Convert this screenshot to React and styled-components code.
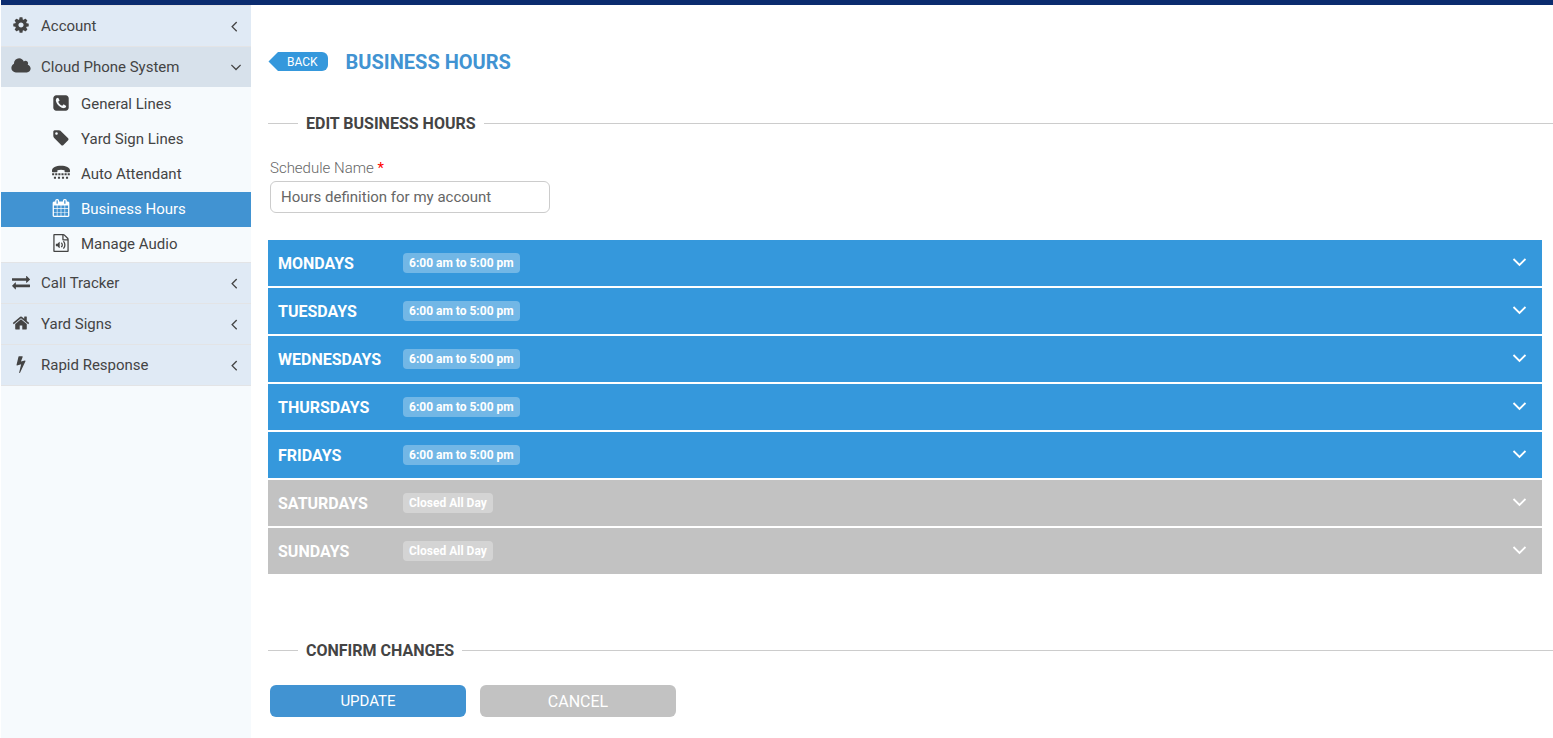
import React, { useState } from "react";
import styled, { createGlobalStyle } from "styled-components";

const Global = createGlobalStyle`
  *, *::before, *::after { box-sizing: border-box; }
  body {
    margin: 0;
    background: #fff;
    color: #444;
    font: 400 15px/20px Roboto, "Liberation Sans", sans-serif;
  }
  button, input { font: inherit; }
`;

const icons = {
  cog: ["0 0 1792 1792", "M1152 896q0-106-75-181t-181-75-181 75-75 181 75 181 181 75 181-75 75-181zm512-109v222q0 12-8 23t-20 13l-185 28q-19 54-39 91 35 50 107 138 10 12 10 25t-9 23q-27 37-99 108t-94 71q-12 0-26-9l-138-108q-44 23-91 38-16 136-29 186-7 28-36 28h-222q-14 0-24.5-8.5t-11.5-21.5l-28-184q-49-16-90-37l-141 107q-10 9-25 9-14 0-25-11-126-114-165-168-7-10-7-23 0-12 8-23 15-21 51-66.5t54-70.5q-27-50-41-99l-183-27q-13-2-21-12.5t-8-23.5v-222q0-12 8-23t19-13l186-28q14-46 39-92-40-57-107-138-10-12-10-24 0-10 9-23 26-36 98.5-107.5t94.5-71.5q13 0 26 10l138 107q44-23 91-38 16-136 29-186 7-28 36-28h222q14 0 24.5 8.5t11.5 21.5l28 184q49 16 90 37l142-107q9-9 24-9 13 0 25 10 129 119 165 170 7 8 7 22 0 12-8 23-15 21-51 66.5t-54 70.5q26 50 41 98l183 28q13 2 21 12.5t8 23.5z"],
  cloud: ["128 0 1792 1792", "M1984 1152q0 159-112.5 271.5t-271.5 112.5h-1088q-185 0-316.5-131.5t-131.5-316.5q0-132 71-241.5t187-163.5q-2-28-2-43 0-212 150-362t362-150q158 0 286.5 88t187.5 230q70-62 166-62 106 0 181 75t75 181q0 75-41 138 129 30 213 134.5t84 239.5z"],
  phone: ["0 0 1792 1792", "M1408 1193q0-11-2-16t-18-16.5-40.5-25-47.5-26.5-45.5-25-28.5-15q-5-3-19-13t-25-15-21-5q-15 0-36.5 20.5t-39.5 45-38.5 45-33.5 20.5q-7 0-16.5-3.5t-15.5-6.5-17-9.5-14-8.5q-99-55-170-126.5t-127-170.5q-2-3-8.5-14t-9.5-17-6.5-15.5-3.5-16.5q0-13 20.5-33.5t45-38.5 45-39.5 20.5-36.5q0-10-5-21t-15-25-13-19q-3-6-15-28.5t-25-45.5-26.5-47.5-25-40.5-16.5-18-16-2q-48 0-101 22-46 21-80 94.5t-34 130.5q0 16 2.5 34t5 30.5 9 33 10 29.5 12.5 33 11 30q60 164 216.5 320.5t320.5 216.5q6 2 30 11t33 12.5 29.5 10 33 9 30.5 5 34 2.5q57 0 130.5-34t94.5-80q22-53 22-101zm256-777v960q0 119-84.5 203.5t-203.5 84.5h-960q-119 0-203.5-84.5t-84.5-203.5v-960q0-119 84.5-203.5t203.5-84.5h960q119 0 203.5 84.5t84.5 203.5z"],
  tag: ["0 0 1792 1792", "M576 448q0-53-37.5-90.5t-90.5-37.5-90.5 37.5-37.5 90.5 37.5 90.5 90.5 37.5 90.5-37.5 37.5-90.5zm1067 576q0 53-37 90l-491 492q-39 37-91 37-53 0-90-37l-715-716q-38-37-64.5-101t-26.5-117v-416q0-52 38-90t90-38h416q53 0 117 26.5t102 64.5l715 714q37 39 37 91z"],
  tty: ["0 0 1792 1792", "M0 640C0 340 400 170 896 170s896 170 896 470v110q0 60-60 60h-420q-60 0-60-60v-120q-160-60-356-60t-356 60v120q0 60-60 60H60q-60 0-60-60zM10 920h210v210H10zM320 920h210v210H320zM630 920h210v210H630zM940 920h210v210H940zM1250 920h210v210h-210zM1560 920h210v210h-210zM190 1270h210v210H190zM590 1270h210v210H590zM990 1270h210v210H990zM1390 1270h210v210h-210z"],
  calendar: ["0 0 1792 1792", "M192 1664h288v-288h-288v288zm352 0h320v-288h-320v288zm-352-352h288v-320h-288v320zm352 0h320v-320h-320v320zm-352-384h288v-288h-288v288zm736 736h320v-288h-320v288zm-384-736h320v-288h-320v288zm768 736h288v-288h-288v288zm-384-352h320v-320h-320v320zm-352-864v-288q0-13-9.5-22.5t-22.5-9.5h-64q-13 0-22.5 9.5t-9.5 22.5v288q0 13 9.5 22.5t22.5 9.5h64q13 0 22.5-9.5t9.5-22.5zm736 864h288v-320h-288v320zm-384-384h320v-288h-320v288zm384 0h288v-288h-288v288zm32-480v-288q0-13-9.5-22.5t-22.5-9.5h-64q-13 0-22.5 9.5t-9.5 22.5v288q0 13 9.5 22.5t22.5 9.5h64q13 0 22.5-9.5t9.5-22.5zm384-64v1280q0 52-38 90t-90 38h-1408q-52 0-90-38t-38-90v-1280q0-52 38-90t90-38h128v-96q0-66 47-113t113-47h64q66 0 113 47t47 113v96h384v-96q0-66 47-113t113-47h64q66 0 113 47t47 113v96h128q52 0 90 38t38 90z"],
  audio: ["0 0 1792 1792", "M1596 380q28 28 48 76t20 88v1152q0 40-28 68t-68 28h-1344q-40 0-68-28t-28-68v-1600q0-40 28-68t68-28h896q40 0 88 20t76 48zm-444-244v376h376q-10-29-22-41l-313-313q-12-12-41-22zm384 1528v-1024h-416q-40 0-68-28t-28-68v-416h-768v1536h1280zM748 786q20 8 20 30v544q0 22-20 30-8 2-12 2-12 0-23-9l-166-167h-131q-14 0-23-9t-9-23v-192q0-14 9-23t23-9h131l166-167q16-15 35-7zm417 689q31 0 50-24 129-159 129-363t-129-363q-16-21-43-24t-47 14q-21 17-23.5 43.5t14.5 47.5q100 123 100 282t-100 282q-17 21-14.5 47.5t23.5 42.5q18 15 40 15zm-211-148q27 0 47-20 87-93 87-219t-87-219q-18-19-45-20t-46 17-20 44.5 18 46.5q52 57 52 131t-52 131q-19 20-18 46.5t20 44.5q20 17 44 17z"],
  exchange: ["0 0 1792 1792", "M1792 1184v192q0 13-9.5 22.5t-22.5 9.5h-1376v192q0 13-9.5 22.5t-22.5 9.5q-12 0-24-10l-319-320q-9-9-9-22 0-14 9-23l320-320q9-9 23-9 13 0 22.5 9.5t9.5 22.5v192h1376q13 0 22.5 9.5t9.5 22.5zm0-544q0 14-9 23l-320 320q-9 9-23 9-13 0-22.5-9.5t-9.5-22.5v-192h-1376q-13 0-22.5-9.5t-9.5-22.5v-192q0-13 9.5-22.5t22.5-9.5h1376v-192q0-14 9-23t23-9q12 0 24 10l319 319q9 9 9 23z"],
  home: ["0 0 1792 1792", "M1472 992v480q0 26-19 45t-45 19h-384v-384h-256v384h-384q-26 0-45-19t-19-45v-480q0-1 .5-3t.5-3l575-474 575 474q1 2 1 6zm223-69l-62 74q-8 9-21 11h-3q-13 0-21-7l-692-577-692 577q-12 8-24 7-13-2-21-11l-62-74q-8-10-7-23.5t11-21.5l719-599q32-26 76-26t76 26l244 204v-195q0-14 9-23t23-9h192q14 0 23 9t9 23v408l219 182q10 8 11 21.5t-7 23.5z"],
  bolt: ["0 0 1792 1792", "M1333 566q18 20 7 44l-540 1157q-13 25-42 25-4 0-14-2-17-5-25.5-19t-4.5-30l197-808-406 101q-4 1-12 1-18 0-31-11-18-15-13-39l201-825q4-14 16-23t28-9h328q19 0 32 12.5t13 29.5q0 8-5 18l-171 463 396-98q8-2 12-2 19 0 34 15z"],
  left: ["0 0 1792 1792", "M1203 544q0 13-10 23l-393 393 393 393q10 10 10 23t-10 23l-50 50q-10 10-23 10t-23-10l-466-466q-10-10-10-23t10-23l466-466q10-10 23-10t23 10l50 50q10 10 10 23z"],
  down: ["-200 0 1792 1792", "M1395 736q0 13-10 23l-466 466q-10 10-23 10t-23-10l-466-466q-10-10-10-23t10-23l50-50q10-10 23-10t23 10l393 393 393-393q10-10 23-10t23 10l50 50q10 10 10 23z"],
};

const Svg = styled.svg`
  display: block;
  flex: none;
  overflow: visible;
  width: 18px;
  height: 18px;
  margin-bottom: ${(p) => (p.$raised ? 2 : 0)}px;
  fill: currentColor;
`;

const Icon = ({ name, raised }) => (
  <Svg $raised={raised} viewBox={icons[name][0]} aria-hidden="true">
    <path d={icons[name][1]} />
  </Svg>
);

const Page = styled.div`
  min-height: 100vh;
  display: flex;
  flex-direction: column;
  padding-left: 1px;
`;

const TopBar = styled.header`
  height: 5px;
  background: #0b2c6f;
`;

const Body = styled.div`
  flex: 1;
  display: flex;
`;

const Sidebar = styled.nav`
  flex: none;
  width: 250px;
  background: #f6fafd;
`;

const List = styled.ul`
  list-style: none;
  margin: 0;
  padding: 0;
`;

const SectionList = styled(List)`
  border-bottom: 1px solid #e3e4e6;
`;

const SectionLink = styled.a`
  display: flex;
  align-items: center;
  gap: 11px;
  height: 41px;
  padding: 0 8px 1px 11px;
  border-top: 1px solid #e3e4e6;
  background: ${(p) => (p.$open ? "#d7e1eb" : "#e0eaf5")};
  color: #444;
  text-decoration: none;
`;

const Label = styled.span`
  flex: 1;
`;

const ItemLink = styled.a`
  display: flex;
  align-items: center;
  gap: 11px;
  height: 35px;
  padding: 0 0 1px 51px;
  background: ${(p) => (p.$active ? "#4193d2" : "transparent")};
  color: ${(p) => (p.$active ? "#fff" : "#444")};
  text-decoration: none;
`;

const Main = styled.main`
  flex: 1;
  min-width: 0;
  padding: 44px 0 20px 17px;
`;

const TitleRow = styled.div`
  display: flex;
  align-items: flex-start;
  gap: 18px;
  height: 26px;
`;

const BackLink = styled.a`
  display: flex;
  height: 19px;
  margin-top: 3px;
  color: #3598dc;
  text-decoration: none;
`;

const BackTip = styled.svg`
  display: block;
  width: 10px;
  height: 19px;
  fill: currentColor;
`;

const BackText = styled.span`
  height: 19px;
  padding: 0 10px 0 9px;
  border-radius: 0 6px 6px 0;
  background: #3598dc;
  color: #fff;
  font-size: 12px;
  line-height: 20px;
`;

const Title = styled.h1`
  margin: 0;
  color: #4193d2;
  font-size: 20px;
  font-weight: 700;
  line-height: 26px;
`;

const Heading = styled.h2`
  display: flex;
  align-items: center;
  gap: 8px;
  margin: 0;
  padding-top: ${(p) => p.$top}px;
  font-size: 16px;
  font-weight: 700;
  line-height: 21px;
  &::before, &::after {
    content: "";
    height: 1px;
    background: #ccc;
  }
  &::before { width: 30px; }
  &::after { flex: 1; }
`;

const Field = styled.div`
  display: flex;
  flex-direction: column;
  align-items: flex-start;
  gap: 3px;
  padding: 24px 2px 27px;
`;

const FieldLabel = styled.label`
  color: #666;
  font-weight: 300;
`;

const Required = styled.span`
  color: #f00;
  font-weight: 400;
`;

const TextInput = styled.input`
  width: 280px;
  height: 32px;
  padding: 0 10px;
  border: 1px solid #ccc;
  border-radius: 6px;
  background: #fff;
  color: #666;
`;

const Days = styled.div`
  display: flex;
  flex-direction: column;
  gap: 2px;
  padding-right: 11px;
`;

const DayRow = styled.button`
  display: flex;
  align-items: center;
  height: 46px;
  padding: 0 12px 0 10px;
  border: 0;
  background: ${(p) => (p.$closed ? "#c2c2c2" : "#3598dc")};
  color: #fff;
  text-align: left;
  cursor: pointer;
`;

const DayName = styled.span`
  width: 125px;
  font-size: 16px;
  font-weight: 700;
  line-height: 21px;
`;

const Badge = styled.span`
  padding: 0 6px;
  border-radius: 4px;
  background: rgba(255, 255, 255, 0.3);
  font-size: 12px;
  font-weight: 700;
  line-height: 20px;
`;

const Chevron = styled.svg`
  display: block;
  width: 20px;
  height: 20px;
  margin-left: auto;
  fill: none;
  stroke: currentColor;
  stroke-width: 1.8;
`;

const Actions = styled.div`
  display: flex;
  gap: 14px;
  padding: 24px 2px 0;
`;

const ActionButton = styled.button`
  width: 196px;
  height: 32px;
  padding: ${(p) => (p.$primary ? 0 : 1)}px 0 0;
  border: 0;
  border-radius: 6px;
  background: ${(p) => (p.$primary ? "#4193d2" : "#c2c2c2")};
  color: #fff;
  font-size: ${(p) => (p.$primary ? 15 : 16)}px;
  line-height: 20px;
  cursor: pointer;
`;

const phoneItems = [
  ["phone", "General Lines"],
  ["tag", "Yard Sign Lines"],
  ["tty", "Auto Attendant"],
  ["calendar", "Business Hours"],
  ["audio", "Manage Audio"],
];

const sections = [
  { icon: "cog", label: "Account" },
  { icon: "cloud", label: "Cloud Phone System", items: phoneItems },
  { icon: "exchange", label: "Call Tracker" },
  { icon: "home", label: "Yard Signs" },
  { icon: "bolt", label: "Rapid Response" },
];

const open = "6:00 am to 5:00 pm";
const shut = "Closed All Day";
const days = [
  ["MONDAYS", open],
  ["TUESDAYS", open],
  ["WEDNESDAYS", open],
  ["THURSDAYS", open],
  ["FRIDAYS", open],
  ["SATURDAYS", shut],
  ["SUNDAYS", shut],
];

export default function App() {
  const [name, setName] = useState("Hours definition for my account");
  return (
    <>
      <Global />
      <Page>
        <TopBar />
        <Body>
          <Sidebar>
            <SectionList>
              {sections.map((s) => (
                <li key={s.label}>
                  <SectionLink href="#" $open={!!s.items}>
                    <Icon name={s.icon} raised />
                    <Label>{s.label}</Label>
                    <Icon name={s.items ? "down" : "left"} />
                  </SectionLink>
                  {s.items && (
                    <List>
                      {s.items.map(([icon, label]) => (
                        <li key={label}>
                          <ItemLink href="#" $active={label === "Business Hours"}>
                            <Icon name={icon} raised />
                            <span>{label}</span>
                          </ItemLink>
                        </li>
                      ))}
                    </List>
                  )}
                </li>
              ))}
            </SectionList>
          </Sidebar>
          <Main>
            <TitleRow>
              <BackLink href="#">
                <BackTip viewBox="0 0 10 19" aria-hidden="true">
                  <path d="M0.500 9.500L10 0V19Z" />
                </BackTip>
                <BackText>BACK</BackText>
              </BackLink>
              <Title>BUSINESS HOURS</Title>
            </TitleRow>
            <Heading $top={38}>EDIT BUSINESS HOURS</Heading>
            <Field>
              <FieldLabel htmlFor="schedule">
                Schedule Name <Required>*</Required>
              </FieldLabel>
              <TextInput id="schedule" type="text" required value={name} onChange={(e) => setName(e.target.value)} />
            </Field>
            <Days>
              {days.map(([day, hours]) => (
                <DayRow key={day} type="button" aria-expanded="false" $closed={hours === shut}>
                  <DayName>{day}</DayName>
                  <Badge>{hours}</Badge>
                  <Chevron viewBox="0 0 20 20" aria-hidden="true">
                    <path d="M3.500 6l6 6 6-6" />
                  </Chevron>
                </DayRow>
              ))}
            </Days>
            <Heading $top={66}>CONFIRM CHANGES</Heading>
            <Actions>
              <ActionButton type="button" $primary>UPDATE</ActionButton>
              <ActionButton type="button">CANCEL</ActionButton>
            </Actions>
          </Main>
        </Body>
      </Page>
    </>
  );
}
